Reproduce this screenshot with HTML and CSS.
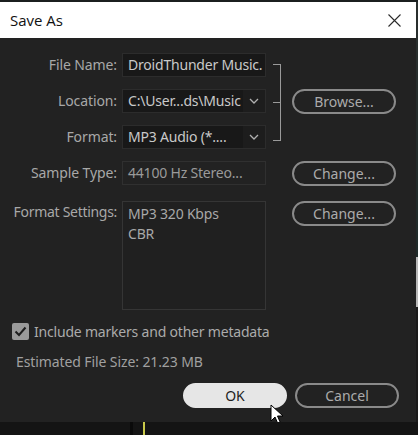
FILE: index.html
```html
<!DOCTYPE html>
<html lang="en">

<head>
    <meta charset="UTF-8">
    <title>Save As</title>
    <meta name="viewport" content="width=device-width, initial-scale=1.0" />
    <link rel="stylesheet" href="styles.css">
</head>

<body>

    <div class="screen">
        <div class="window">
            <div class="titlebar">
                <span class="title">Save As</span>
                <svg class="close" width="13" height="13" viewBox="0 0 13 13">
                    <path d="M0.5 0.5 L12.5 12.5 M12.5 0.5 L0.5 12.5" stroke="#2b2b2b" stroke-width="1.1" fill="none" />
                </svg>
            </div>

            <div class="content">
                <div class="form">
                    <label class="label r1">File Name:</label>
                    <div class="field input r1"><span>DroidThunder Music.</span></div>

                    <label class="label r2">Location:</label>
                    <div class="field select r2">
                        <span>C:\User...ds\Music</span>
                        <i class="arrow"><svg width="10" height="6" viewBox="0 0 10 6"><path d="M1 1 L5 5 L9 1" stroke="#b0b0b0" stroke-width="1.3" fill="none" /></svg></i>
                    </div>
                    <button class="button r2">Browse...</button>

                    <label class="label r3">Format:</label>
                    <div class="field select r3">
                        <span>MP3 Audio (*....</span>
                        <i class="arrow"><svg width="10" height="6" viewBox="0 0 10 6"><path d="M1 1 L5 5 L9 1" stroke="#b0b0b0" stroke-width="1.3" fill="none" /></svg></i>
                    </div>

                    <div class="bracket"></div>

                    <label class="label r4">Sample Type:</label>
                    <div class="field plain r4"><span>44100 Hz Stereo...</span></div>
                    <button class="button r4">Change...</button>

                    <label class="label r5">Format Settings:</label>
                    <div class="field box r5">MP3 320 Kbps<br>CBR</div>
                    <button class="button r5 top">Change...</button>
                </div>

                <div class="check-row">
                    <span class="checkbox">
                        <svg width="13" height="11" viewBox="0 0 13 11"><path d="M1.5 5.5 L5 9 L11.5 1.5" stroke="#1e1e1e" stroke-width="2" fill="none" /></svg>
                    </span>
                    <span>Include markers and other metadata</span>
                </div>

                <div class="estimate">Estimated File Size: 21.23 MB</div>

                <div class="actions">
                    <button class="button primary">OK</button>
                    <button class="button">Cancel</button>
                </div>
            </div>

            <div class="cursor">
                <svg width="14" height="22" viewBox="0 0 14 22">
                    <path d="M1 1 L1 17 L5 13 L8 20 L10.5 19 L7.5 12 L13 12 Z" fill="#ffffff" stroke="#000" stroke-width="1" />
                </svg>
            </div>
        </div>
        <div class="side"></div>
    </div>

    <div class="timeline">
        <span class="mark"></span>
        <span class="playhead"></span>
    </div>

</body>

</html>
```

FILE: styles.css
```css
* {
    box-sizing: border-box;
}

body {
    margin: 0;
    background-color: #161616;
    font-family: 'Noto Sans', sans-serif;
    font-size: 14px;
    overflow: hidden;
}

.screen {
    display: flex;
    padding-top: 2px;
    background-color: #1b1f1f;
}

.window {
    position: relative;
    width: 416px;
    background-color: #222222;
}

.side {
    flex: 1;
    background: linear-gradient(#2a2f2e 0, #1f2a29 255px, #b8b8b8 255px, #b8b8b8 305px, #1a1a1a 305px);
}

.titlebar {
    height: 36px;
    background-color: #ffffff;
    display: flex;
    align-items: center;
    justify-content: space-between;
    padding: 0 15px 0 10px;
}

.title {
    font-family: 'Open Sans', sans-serif;
    font-size: 15px;
    color: #111111;
}

.close {
    display: block;
}

.content {
    height: 384px;
    padding: 15px 0 0 0;
}

.form {
    display: grid;
    grid-template-columns: 122px 144px 26px 104px;
    grid-template-rows: 24px 24px 24px 24px 113px;
    row-gap: 12px;
}

.r1 { grid-row: 1; }
.r2 { grid-row: 2; }
.r3 { grid-row: 3; }
.r4 { grid-row: 4; }
.r5 { grid-row: 5; margin-top: 4px; }

.label {
    grid-column: 1;
    text-align: right;
    color: #a8a8a8;
    line-height: 24px;
    padding-right: 5px;
    white-space: nowrap;
    letter-spacing: -0.1px;
}

.label.r5 {
    line-height: 18px;
    padding-top: 2px;
    letter-spacing: -0.3px;
}

.field {
    grid-column: 2;
    color: #c9c9c9;
    line-height: 22px;
    white-space: nowrap;
    overflow: hidden;
    border: 1px solid #2c2c2c;
    padding: 0 5px;
    letter-spacing: -0.2px;
}

.input {
    background-color: #181818;
}

.select {
    display: flex;
    background-color: #181818;
    padding-right: 0;
}

.select span {
    flex: 1;
    overflow: hidden;
}

.arrow {
    width: 22px;
    flex: none;
    display: flex;
    align-items: center;
    justify-content: center;
    background-color: #1d1d1d;
}

.plain {
    background-color: #222222;
    border-color: #303030;
    color: #9a9a9a;
}

.box {
    background-color: #202020;
    border-color: #353535;
    color: #a8a8a8;
    line-height: 20px;
    padding-top: 2px;
    white-space: normal;
}

.bracket {
    grid-column: 3;
    grid-row: 1 / 4;
    position: relative;
    width: 8px;
    margin: 11px 0 0 7px;
    height: 77px;
    border: 1.5px solid #9a9a9a;
    border-left: none;
}

.bracket::before {
    content: "";
    position: absolute;
    left: 0;
    top: 37px;
    width: 7px;
    border-top: 1.5px solid #9a9a9a;
}

.button {
    grid-column: 4;
    height: 25px;
    width: 104px;
    border: 2px solid #8a8a8a;
    border-radius: 13px;
    background-color: transparent;
    color: #ababab;
    font-family: 'Noto Sans', sans-serif;
    font-size: 14px;
    padding: 0;
    line-height: 20px;
}

.button.top {
    align-self: start;
}

.check-row {
    display: flex;
    align-items: center;
    gap: 5px;
    margin: 12px 0 0 12px;
    color: #ababab;
    font-size: 14px;
    letter-spacing: -0.2px;
}

.checkbox {
    width: 17px;
    height: 17px;
    background-color: #9a9a9a;
    border-radius: 2px;
    display: flex;
    align-items: center;
    justify-content: center;
}

.estimate {
    margin: 11px 0 0 16px;
    color: #a0a0a0;
    letter-spacing: -0.1px;
}

.actions {
    display: flex;
    gap: 8px;
    margin: 12px 0 0 183px;
}

.button.primary {
    background-color: #e6e6e6;
    border-color: #e6e6e6;
    color: #1e1e1e;
}

.cursor {
    position: absolute;
    left: 270px;
    top: 402px;
}

.timeline {
    position: relative;
    height: 15px;
    background-color: #141414;
}

.mark {
    position: absolute;
    left: 130px;
    top: 0;
    width: 3px;
    height: 15px;
    background-color: #0a0a0a;
}

.playhead {
    position: absolute;
    left: 143px;
    top: 0;
    width: 2px;
    height: 15px;
    background-color: #c9c94a;
}
```
